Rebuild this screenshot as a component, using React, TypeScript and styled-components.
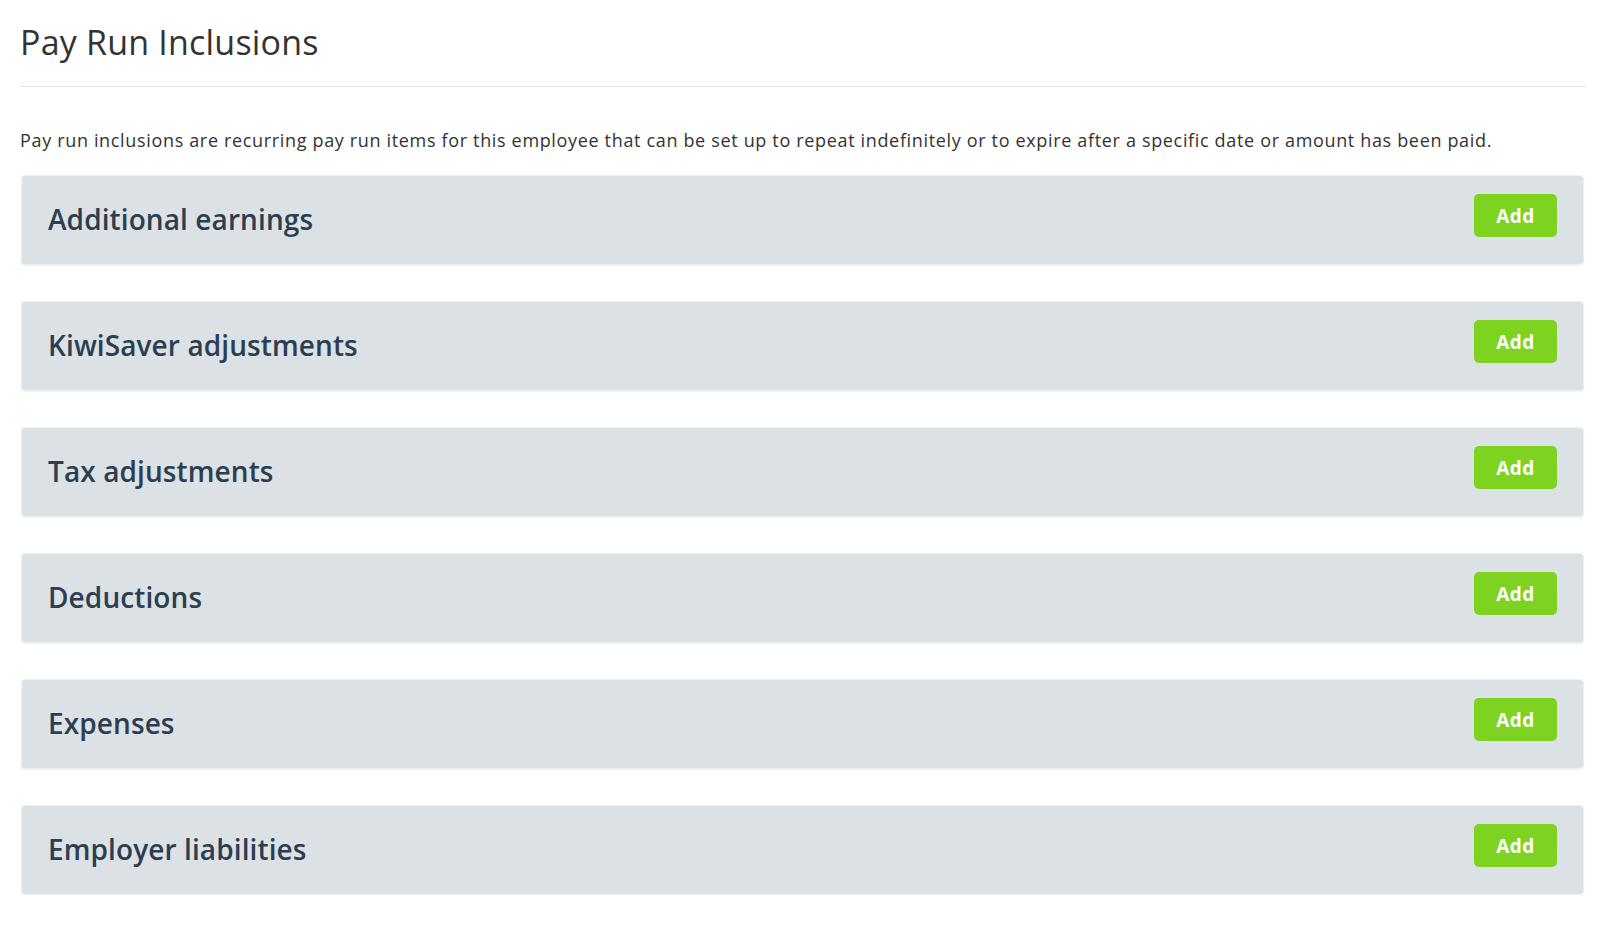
import React from "react";
import styled, { createGlobalStyle } from "styled-components";

const GlobalStyle = createGlobalStyle`
  html, body { margin: 0; padding: 0; background: #ffffff; }
  body { font-family: "Open Sans", "Lato", Arial, sans-serif; }
`;

const Page = styled.div`
  padding: 0 21px 0 20px;
`;

const Heading = styled.h1`
  margin: 0;
  padding-top: 20px;
  height: 87px;
  box-sizing: border-box;
  font-size: 34px;
  line-height: 44px;
  font-weight: 400;
  letter-spacing: 0.2px;
  color: #333333;
  border-bottom: 1px solid #e3e3e3;
`;

const Intro = styled.p`
  margin: 0;
  padding-top: 41px;
  font-size: 18px;
  line-height: 24px;
  letter-spacing: 0.66px;
  color: #333333;
`;

const List = styled.div`
  display: flex;
  flex-direction: column;
  gap: 36px;
  margin-top: 23px;
  padding: 0 2px 0 1px;
`;

const Panel = styled.section`
  box-sizing: border-box;
  height: 90px;
  display: flex;
  align-items: flex-start;
  justify-content: space-between;
  padding: 18px 26px 0 26px;
  background: #dbe1e5;
  border: 1px solid #edf0f2;
  border-radius: 4px;
  box-shadow: 0 1px 2px rgba(0, 0, 0, 0.06);
`;

const PanelTitle = styled.h2`
  margin: 0;
  padding-top: 5px;
  font-size: 28px;
  line-height: 40px;
  font-weight: 600;
  letter-spacing: 0.1px;
  color: #2c3e50;
`;

const AddButton = styled.button`
  width: 83px;
  height: 43px;
  border: none;
  border-radius: 5px;
  background: #7ed321;
  color: #ffffff;
  font-family: inherit;
  font-size: 19px;
  font-weight: 700;
  letter-spacing: 0.4px;
  cursor: pointer;
`;

const sections = [
  "Additional earnings",
  "KiwiSaver adjustments",
  "Tax adjustments",
  "Deductions",
  "Expenses",
  "Employer liabilities",
];

export default function App() {
  return (
    <>
      <GlobalStyle />
      <Page>
        <Heading>Pay Run Inclusions</Heading>
        <Intro>
          Pay run inclusions are recurring pay run items for this employee that can be set up to
          repeat indefinitely or to expire after a specific date or amount has been paid.
        </Intro>
        <List>
          {sections.map((s) => (
            <Panel key={s}>
              <PanelTitle>{s}</PanelTitle>
              <AddButton>Add</AddButton>
            </Panel>
          ))}
        </List>
      </Page>
    </>
  );
}
